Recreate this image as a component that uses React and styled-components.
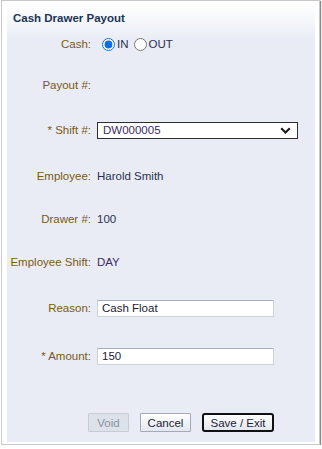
import React, { useState } from 'react'
import styled, { createGlobalStyle } from 'styled-components'

const Global = createGlobalStyle`
  body {
    margin: 0;
    background: #ffffff;
    font-family: "Liberation Sans", Arial, sans-serif;
  }
`

const Frame = styled.div`
  margin-left: 1px;
  width: 319px;
  height: 445px;
  box-sizing: border-box;
  border: 1px solid #c9c9c9;
  box-shadow: 1px 1px 1px #8a8a8a;
  background: #ffffff;
  padding: 3px 4px 2px 5px;
`

const Panel = styled.div`
  height: 100%;
  box-sizing: border-box;
  background: linear-gradient(#ffffff 0, #e9ecf5 36px, #e9ecf5 100%);
  display: flex;
  flex-direction: column;
`

const Title = styled.div`
  height: 27px;
  padding-left: 6px;
  display: flex;
  align-items: center;
  font-size: 11.5px;
  font-weight: bold;
  color: #1d3553;
`

const Row = styled.div`
  display: flex;
  align-items: center;
  height: 22px;
  margin-top: ${p => p.$top}px;
`

const Label = styled.div`
  width: 84px;
  flex: none;
  text-align: right;
  font-size: 11.5px;
  color: #7a5a14;
`

const Value = styled.div`
  margin-left: 6px;
  font-size: 11.5px;
  color: ${p => (p.$purple ? '#3d2c62' : '#2b3050')};
  display: flex;
  align-items: center;
`

const Radio = styled.input`
  margin: 0 2px 0 5px;
  width: 13px;
  height: 13px;
  accent-color: #0b6ee6;
`

const RadioText = styled.span`
  color: #2b3050;
`

const SelectBox = styled.div`
  position: relative;
  margin-left: 6px;
  width: 201px;
  height: 17px;
  box-sizing: border-box;
  border: 1px solid #2e2e2e;
  background: #ffffff;
  display: flex;
  align-items: center;
  padding-left: 5px;
  font-size: 11.5px;
  color: #3d2c62;
`

const Chevron = styled.svg`
  position: absolute;
  right: 6px;
  top: 4px;
`

const TextBox = styled.input`
  margin-left: 6px;
  width: 177px;
  height: 17px;
  box-sizing: border-box;
  border: 1px solid #cdd1d8;
  border-top-color: #a9adb6;
  background: #ffffff;
  padding: 0 0 0 4px;
  font-family: "Liberation Sans", Arial, sans-serif;
  font-size: 11.5px;
  color: #222233;
  outline: none;
`

const Buttons = styled.div`
  display: flex;
  gap: 11px;
  padding-left: 81px;
  margin-top: ${p => p.$top}px;
`

const Button = styled.button`
  height: 19px;
  padding: 0;
  width: ${p => p.$w}px;
  box-sizing: border-box;
  font-family: "Liberation Sans", Arial, sans-serif;
  font-size: 11.5px;
  color: #1c1f33;
  border: 1px solid #a4a9b4;
  border-radius: 1px;
  background: linear-gradient(#ffffff, #e3e7ef);
  cursor: pointer;

  &:disabled {
    color: #8c919c;
    border-color: #c8ccd5;
    background: #dde1ea;
    cursor: default;
  }
`

const SaveButton = styled(Button)`
  border: 2px solid #111111;
  border-radius: 3px;
`

const App = () => {
  const [cash, setcash] = useState('in')
  const [reason, setreason] = useState('Cash Float')
  const [amount, setamount] = useState('150')

  return (
    <>
      <Global />
      <Frame>
        <Panel>
          <Title>Cash Drawer Payout</Title>

          <Row $top={2}>
            <Label>Cash:</Label>
            <Value>
              <Radio type="radio" name="cash" checked={cash === 'in'} onChange={() => setcash('in')} />
              <RadioText>IN</RadioText>
              <Radio type="radio" name="cash" checked={cash === 'out'} onChange={() => setcash('out')} />
              <RadioText>OUT</RadioText>
            </Value>
          </Row>

          <Row $top={19}>
            <Label>Payout #:</Label>
          </Row>

          <Row $top={23}>
            <Label>* Shift #:</Label>
            <SelectBox>
              DW000005
              <Chevron width="11" height="7" viewBox="0 0 11 7">
                <path d="M1.2 1.2 L5.5 5.5 L9.8 1.2" fill="none" stroke="#1a1a1a" strokeWidth="2" />
              </Chevron>
            </SelectBox>
          </Row>

          <Row $top={24}>
            <Label>Employee:</Label>
            <Value>Harold Smith</Value>
          </Row>

          <Row $top={21}>
            <Label>Drawer #:</Label>
            <Value>100</Value>
          </Row>

          <Row $top={21}>
            <Label>Employee Shift:</Label>
            <Value $purple>DAY</Value>
          </Row>

          <Row $top={24}>
            <Label>Reason:</Label>
            <TextBox value={reason} onChange={e => setreason(e.target.value)} />
          </Row>

          <Row $top={26}>
            <Label>* Amount:</Label>
            <TextBox value={amount} onChange={e => setamount(e.target.value)} />
          </Row>

          <Buttons $top={46}>
            <Button $w={41} disabled>Void</Button>
            <Button $w={51}>Cancel</Button>
            <SaveButton $w={72}>Save / Exit</SaveButton>
          </Buttons>
        </Panel>
      </Frame>
    </>
  )
}

export default App
